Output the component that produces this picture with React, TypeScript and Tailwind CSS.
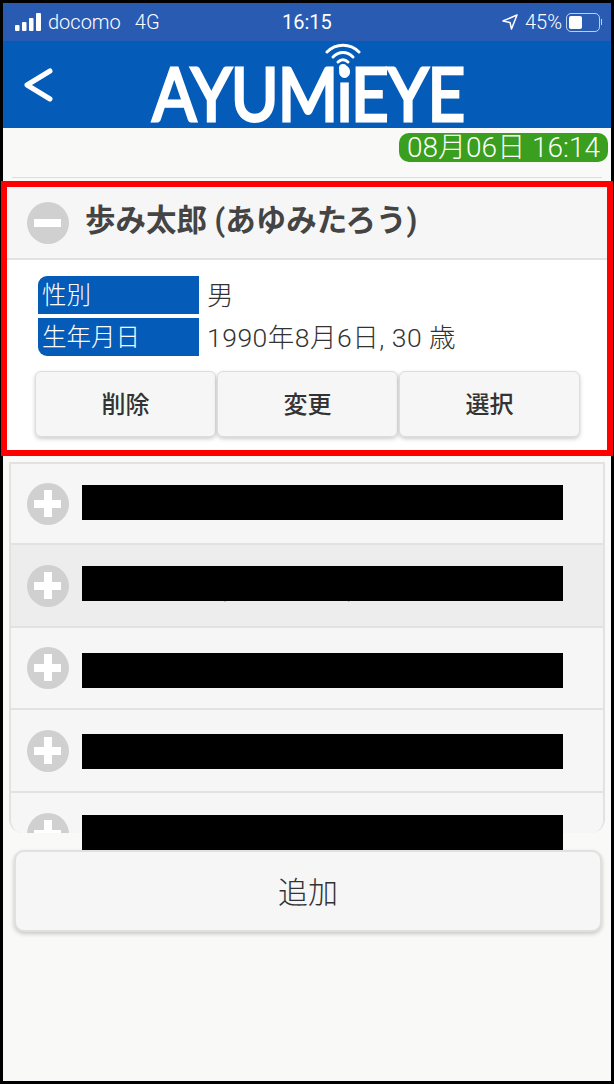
import React from 'react';

const FONT = "font-['Roboto','Noto_Sans_CJK_JP',sans-serif]";

const CircleIcon: React.FC<{ plus?: boolean }> = ({ plus }) => (
  <svg width="42" height="42" viewBox="0 0 42 42" className="shrink-0">
    <circle cx="21" cy="21" r="21" fill="#d0d0d0" />
    <rect x="7" y="17" width="27" height="8" fill="#fff" />
    {plus && <rect x="17" y="7" width="8" height="27" fill="#fff" />}
  </svg>
);

const SignalBars = () => (
  <svg width="27" height="18" viewBox="0 0 27 18" fill="#fff">
    <rect x="0" y="12" width="4.5" height="6" rx="1" />
    <rect x="7" y="9" width="4.5" height="9" rx="1" />
    <rect x="14" y="5" width="4.5" height="13" rx="1" />
    <rect x="21" y="0" width="5" height="18" rx="1" />
  </svg>
);

const Battery = () => (
  <div className="flex items-center">
    <div className="w-[34px] h-[19px] rounded-[5px] border border-white/70 p-[2px]">
      <div className="w-[13px] h-full rounded-[2px] bg-white" />
    </div>
    <div className="w-[1px] h-[6px] bg-white/70 ml-[1px]" />
  </div>
);

const Logo = () => (
  <div className="relative w-[316px] h-[82px] flex justify-center items-end">
    <svg
      width="36"
      height="34"
      viewBox="0 0 36 34"
      fill="none"
      stroke="#fff"
      strokeWidth="3"
      strokeLinecap="round"
      className="absolute left-[175px] top-[0px]"
    >
      <path d="M2 10 C11 1 25 1 34 10" />
      <path d="M8 15 C14 9 22 9 28 15" />
      <path d="M13 20 C16 17 20 17 23 20" />
      <circle cx="18" cy="26" r="4" fill="#fff" stroke="none" />
    </svg>
    <span className="font-['Lato',sans-serif] font-normal text-white text-[74px] leading-[70px] tracking-[-1px] h-[66px] whitespace-nowrap scale-x-[0.88] [-webkit-text-stroke:3px_white]">
      AYUMiEYE
    </span>
  </div>
);

const InfoRow: React.FC<{ label: string; value: string; className: string }> = ({ label, value, className }) => (
  <div className="flex items-center h-[38px]">
    <div className={`w-[161px] h-full bg-[#055bb8] text-white text-[24.5px] leading-[40px] font-light pl-[4px] ${className}`}>{label}</div>
    <div className="ml-[8px] text-[26.5px] leading-[41px] font-light tracking-[0.5px] text-[#333]">{value}</div>
  </div>
);

const ActionButton: React.FC<{ label: string }> = ({ label }) => (
  <button className="w-[181px] h-[66px] pt-[2px] rounded-[6px] border border-[#ddd] bg-[#f6f6f6] shadow-[0_2px_4px_rgba(0,0,0,0.2)] text-[24px] font-medium text-[#333]">
    {label}
  </button>
);

// redacted rows: background colour of each row and its height
const rows = [
  { bg: 'bg-[#f6f6f6]', h: 'h-[81px]' },
  { bg: 'bg-[#ededed]', h: 'h-[83px]' },
  { bg: 'bg-[#f6f6f6]', h: 'h-[82px]' },
  { bg: 'bg-[#f6f6f6]', h: 'h-[83px]' },
  { bg: 'bg-[#f6f6f6]', h: 'h-[83px]' },
];

const bars = ['top-[23px]', 'top-[104px]', 'top-[191px]', 'top-[272px]', 'top-[353px]'];

export default function App() {
  return (
    <div className={`w-[614px] h-[1084px] bg-black p-[3px] overflow-hidden ${FONT}`}>
      <div className="h-full bg-[#f9f9f7] flex flex-col">
        {/* Status bar */}
        <div className="h-[38px] shrink-0 bg-[#2a5bb3] text-white text-[20px] flex items-center justify-between pl-[12px] pr-[9px] relative">
          <div className="flex items-center">
            <SignalBars />
            <span className="ml-[6px] font-light">docomo</span>
            <span className="ml-[14px] font-light">4G</span>
          </div>
          <span className="absolute left-[279px]">16:15</span>
          <div className="flex items-center">
            <svg width="16" height="16" viewBox="0 0 16 16" fill="none" stroke="#fff" strokeWidth="1.5" strokeLinejoin="round">
              <path d="M15 1 L1 7 L8 8.5 L9.5 15 Z" />
            </svg>
            <span className="ml-[7px] font-light">45%</span>
            <div className="ml-[4px]">
              <Battery />
            </div>
          </div>
        </div>

        {/* Header */}
        <div className="h-[87px] shrink-0 bg-[#055bb8] flex items-center relative">
          <svg width="34" height="38" viewBox="0 0 34 38" fill="none" stroke="#fff" strokeWidth="5" strokeLinecap="round" strokeLinejoin="round" className="ml-[19px]">
            <path d="M28 5 L5 19 L28 33" />
          </svg>
          <div className="ml-[94px] -mt-[3px]">
            <Logo />
          </div>
        </div>

        {/* Date badge */}
        <div className="flex justify-end pt-[5px] pr-[3px]">
          <div className="w-[209px] h-[29px] rounded-[10px] bg-[#3a9e1e] text-white text-[28px] leading-[30px] font-light text-center whitespace-nowrap">
            08月06日 16:14
          </div>
        </div>
        <div className="h-[1px] bg-[#ddd] mx-[9px] mt-[15px]" />

        {/* Selected person, marked by the red frame */}
        <div className="mt-[3px] -mx-[2px] h-[275px] shrink-0 border-[6px] border-[#ff0000] bg-white">
          <div className="h-[73px] bg-[#f6f6f6] border-b-2 border-[#e2e2e2] flex items-center pl-[20px]">
            <CircleIcon />
            <span className="ml-[16px] -mt-[4px] text-[30.5px] font-bold text-[#444]">歩み太郎 (あゆみたろう)</span>
          </div>
          <div className="pt-[16px] pl-[31px]">
            <InfoRow label="性別" value="男" className="rounded-tl-[9px]" />
            <div className="mt-[4px]">
              <InfoRow label="生年月日" value="1990年8月6日, 30 歳" className="rounded-bl-[9px]" />
            </div>
            <div className="flex gap-[1px] mt-[15px] -ml-[3px]">
              <ActionButton label="削除" />
              <ActionButton label="変更" />
              <ActionButton label="選択" />
            </div>
          </div>
        </div>

        {/* Other people, names blacked out */}
        <div className="relative mt-[6px] mx-[6px] h-[371px] shrink-0">
          <div className="h-full overflow-hidden rounded-b-[14px] border-x-2 border-[#e2e2e2]">
            {rows.map((row, i) => (
              <div key={i} className={`${row.h} ${row.bg} border-t-2 border-[#e2e2e2] flex items-center pl-[16px]`}>
                <CircleIcon plus />
              </div>
            ))}
          </div>
          {/* bits of the names that stick out below the black bars */}
          <span className="absolute left-[362px] top-[28px] text-[30px] leading-[30px] font-bold text-[#444]">,</span>
          <span className="absolute left-[207px] top-[108px] text-[30px] leading-[30px] font-bold text-[#444]">(</span>
          <span className="absolute left-[338px] top-[108px] text-[30px] leading-[30px] font-bold text-[#444]">)</span>
          {bars.map((top) => (
            <div key={top} className={`absolute left-[73px] w-[481px] h-[35px] bg-black ${top}`} />
          ))}
        </div>

        {/* Add button */}
        <button className="relative mt-[17px] ml-[11px] w-[588px] h-[82px] pt-[2px] shrink-0 rounded-[10px] border-2 border-[#e0e0e0] bg-[#f6f6f6] shadow-[0_2px_4px_rgba(0,0,0,0.2)] text-[30px] font-light text-[#333]">
          追加
        </button>
      </div>
    </div>
  );
}
